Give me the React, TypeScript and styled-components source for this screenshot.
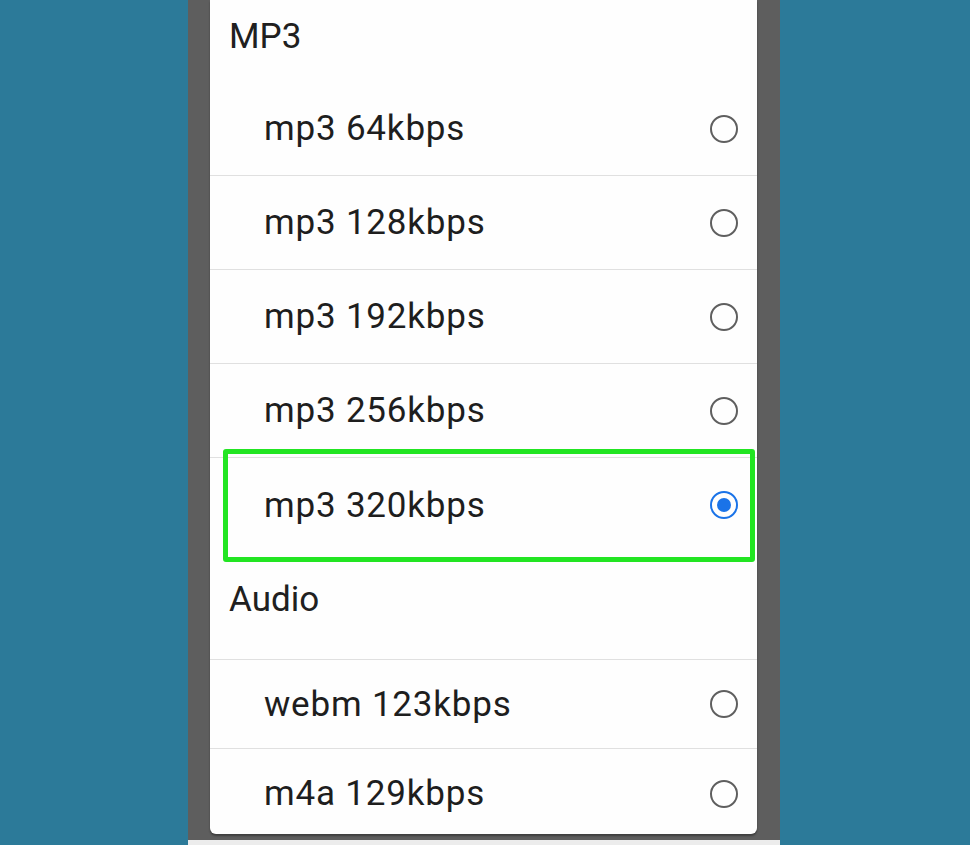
import React from 'react';
import styled, { createGlobalStyle } from 'styled-components';

type Option = { label: string; selected?: boolean };
type Group = { title: string; headerHeight: number; titleTop: number; rowHeight: number; divided?: boolean; options: Option[] };

const groups: Group[] = [
  {
    title: 'MP3',
    headerHeight: 82,
    titleTop: 14,
    rowHeight: 94,
    options: [
      { label: 'mp3 64kbps' },
      { label: 'mp3 128kbps' },
      { label: 'mp3 192kbps' },
      { label: 'mp3 256kbps' },
      { label: 'mp3 320kbps', selected: true },
    ],
  },
  {
    title: 'Audio',
    headerHeight: 108,
    titleTop: 25,
    rowHeight: 89,
    divided: true,
    options: [{ label: 'webm 123kbps' }, { label: 'm4a 129kbps' }],
  },
];

function Radio({ checked }: { checked?: boolean }) {
  return (
    <RadioMark $checked={checked}>
      {checked ? <Dot /> : null}
    </RadioMark>
  );
}

export default function App() {
  return (
    <>
      <GlobalStyle />
      <Stage>
        <Phone>
          <Dialog>
            {groups.map((group) => (
              <section key={group.title}>
                <GroupTitle $height={group.headerHeight} $top={group.titleTop} $divided={group.divided}>
                  {group.title}
                </GroupTitle>
                {group.options.map((option, i) => (
                  <OptionRow
                    key={option.label}
                    $height={group.rowHeight}
                    $last={i === group.options.length - 1}
                  >
                    <span>{option.label}</span>
                    <Radio checked={option.selected} />
                    {option.selected ? <Highlight /> : null}
                  </OptionRow>
                ))}
              </section>
            ))}
          </Dialog>
          <BottomStrip />
        </Phone>
      </Stage>
    </>
  );
}

const GlobalStyle = createGlobalStyle`
  html, body {
    margin: 0;
    padding: 0;
    background: #2c7a99;
  }
  body {
    font-family: Roboto, "Noto Sans", Arial, sans-serif;
  }
`;

const Stage = styled.div`
  display: flex;
  justify-content: center;
  height: 845px;
  overflow: hidden;
  background: #2c7a99;
  padding-right: 2px;
`;

const Phone = styled.div`
  width: 592px;
  height: 845px;
  display: flex;
  flex-direction: column;
  background: #5e5e5e;
  padding: 0 23px 0 22px;
  box-sizing: border-box;
`;

const Dialog = styled.div`
  height: 834px;
  background: #fefefe;
  border-radius: 0 0 6px 6px;
  box-shadow: 0 2px 2px rgba(0, 0, 0, 0.35);
  overflow: hidden;
`;

const BottomStrip = styled.div`
  margin: 6px -23px 0 -22px;
  flex: 1;
  background: #ececec;
`;

const GroupTitle = styled.div<{ $height: number; $top: number; $divided?: boolean }>`
  height: ${(p) => p.$height}px;
  box-sizing: border-box;
  padding: ${(p) => p.$top}px 0 0 19px;
  font-size: 35px;
  line-height: 46px;
  color: #202020;
  border-bottom: ${(p) => (p.$divided ? '1.5px solid #e0e0e0' : 'none')};
`;

const OptionRow = styled.div<{ $height: number; $last?: boolean }>`
  position: relative;
  height: ${(p) => p.$height}px;
  box-sizing: border-box;
  display: flex;
  align-items: center;
  justify-content: space-between;
  padding: 0 19px 0 54px;
  font-size: 35px;
  letter-spacing: 0.8px;
  color: #1e1e1e;
  border-bottom: ${(p) => (p.$last ? 'none' : '1.5px solid #e0e0e0')};
`;

const RadioMark = styled.div<{ $checked?: boolean }>`
  width: 28px;
  height: 28px;
  box-sizing: border-box;
  border-radius: 50%;
  border: 2.5px solid ${(p) => (p.$checked ? '#1a73e8' : '#5f5f5f')};
  display: flex;
  align-items: center;
  justify-content: center;
`;

const Dot = styled.div`
  width: 14px;
  height: 14px;
  border-radius: 50%;
  background: #1a73e8;
`;

const Highlight = styled.div`
  position: absolute;
  left: 13px;
  right: 2px;
  top: -9px;
  bottom: -10px;
  border: 5px solid #22e522;
  border-radius: 3px;
  pointer-events: none;
`;
